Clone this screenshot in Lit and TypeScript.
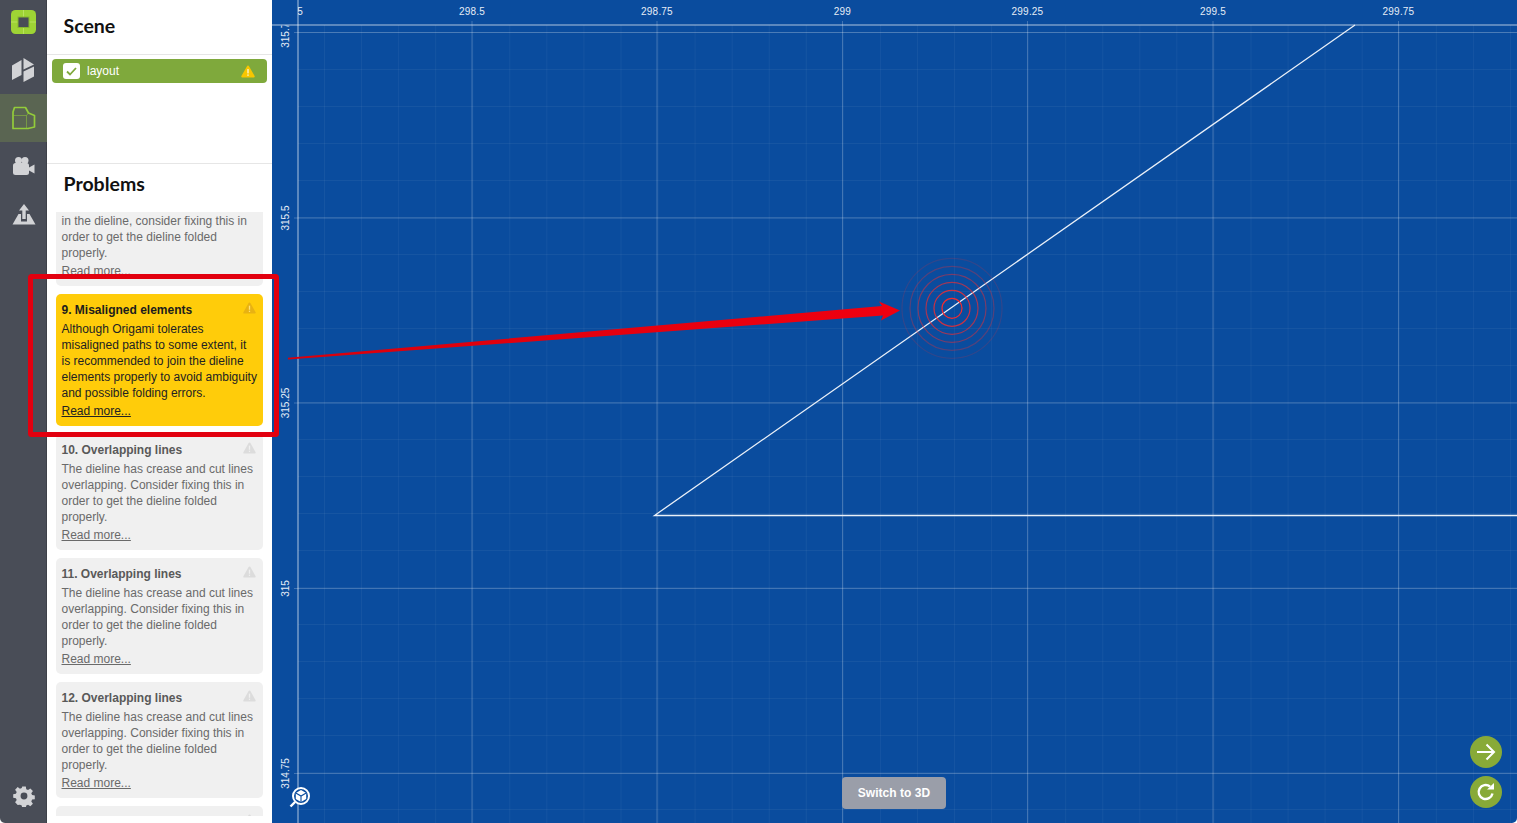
import { LitElement, html, css, svg } from "lit";
import { customElement } from "lit/decorators.js";

const warn = (cls: string) => html`<svg class=${cls} viewBox="0 0 14 13"><path d="M7 .5c.5 0 .8.3 1 .7l5.6 9.8c.4.7 0 1.5-.8 1.5H1.2c-.8 0-1.2-.8-.8-1.5L6 1.2C6.200.8 6.500.5 7 .5z" fill="currentColor"/><rect x="6.300" y="4" width="1.400" height="4.400" fill="var(--mark,#fff)"/><rect x="6.300" y="9.400" width="1.400" height="1.400" fill="var(--mark,#fff)"/></svg>`;

const overlap = "The dieline has crease and cut lines overlapping. Consider fixing this in order to get the dieline folded properly.";
const problems = [
  { t: "8. Open paths", b: "There are some open paths left\nin the dieline, consider fixing this in order to get the dieline folded properly.", hot: false },
  { t: "9. Misaligned elements", b: "Although Origami tolerates misaligned paths to some extent, it is recommended to join the dieline elements properly to avoid ambiguity and possible folding errors.", hot: true },
  { t: "10. Overlapping lines", b: overlap, hot: false },
  { t: "11. Overlapping lines", b: overlap, hot: false },
  { t: "12. Overlapping lines", b: overlap, hot: false },
  { t: "13. Overlapping lines", b: overlap, hot: false },
];

const xMajor = [
  { x: 287, l: "298.25" }, { x: 472, l: "298.5" }, { x: 657, l: "298.75" }, { x: 842.500, l: "299" },
  { x: 1027.500, l: "299.25" }, { x: 1213, l: "299.5" }, { x: 1398.500, l: "299.75" },
];
const yMajor = [
  { y: 32.500, l: "315.75" }, { y: 218, l: "315.5" }, { y: 403, l: "315.25" }, { y: 588.500, l: "315" }, { y: 773.500, l: "314.75" },
];
const W = 1517 - 272;
const range = (a: number, b: number, s: number) => { const o: number[] = []; for (let v = a; v <= b; v += s) o.push(v); return o; };

const grid = () => svg`
  <defs>
    <clipPath id="topclip"><rect x="26" y="0" width="${W}" height="25"/></clipPath>
    <clipPath id="leftclip"><rect x="0" y="25.500" width="26" height="798"/></clipPath>
  </defs>
  ${range(324.500, 1517, 37.060).map(x => svg`<line x1=${x - 272} x2=${x - 272} y1="25" y2="823" stroke="#fff" stroke-opacity=".05"/>`)}
  ${range(32.500, 823, 37).map(y => svg`<line x1="26" x2=${W} y1=${y} y2=${y} stroke="#fff" stroke-opacity=".05"/>`)}
  ${xMajor.slice(1).map(m => svg`<line x1=${m.x - 272} x2=${m.x - 272} y1="21" y2="823" stroke="#fff" stroke-opacity=".23"/>`)}
  ${yMajor.map(m => svg`<line x1="22" x2=${W} y1=${m.y} y2=${m.y} stroke="#fff" stroke-opacity=".23"/>`)}
  <line x1="0" x2=${W} y1="25" y2="25" stroke="#fff" stroke-opacity=".45" stroke-width="1.500"/>
  <line x1="26" x2="26" y1="0" y2="823" stroke="#fff" stroke-opacity=".45" stroke-width="1.500"/>
  <g clip-path="url(#topclip)">
    ${xMajor.map(m => svg`<text class="tick" x=${m.x - 272} y="15" text-anchor="middle">${m.l}</text>`)}
  </g>
  <g clip-path="url(#leftclip)">
    ${yMajor.map(m => svg`<text class="tick side-tick" transform="translate(17 ${m.y}) rotate(-90)" text-anchor="middle">${m.l}</text>`)}
  </g>
  <path d="M1083 25 L382.500 515.500 H${W}" fill="none" stroke="#eaf0f8" stroke-width="1.300"/>
  ${[[10, .95], [18, .8], [26, .62], [34, .45], [42, .3], [50, .16]].map(([r, o]) => svg`<circle cx="680" cy="308.300" r=${r} fill="none" stroke="#ff2a2a" stroke-opacity=${o} stroke-width="1.200"/>`)}
`;

@customElement("app-root")
export class AppRoot extends LitElement {
  static styles = css`
    :host { display: block; width: 100vw; height: 100vh; overflow: hidden; background: #fff; font-family: "Liberation Sans", Arial, sans-serif; }
    .app { position: relative; display: flex; height: 100%; }
    .rail { width: 47px; flex: none; background: #494d57; display: flex; flex-direction: column; border-bottom-left-radius: 5px; box-shadow: inset -1px 0 0 #3e4149; }
    .rail-item { height: 48px; display: flex; align-items: center; justify-content: center; flex: none; box-sizing: border-box; }
    .rail-item.logo { height: 46px; padding-bottom: 2px; }
    .rail-item.active { background: #5a6552; }
    .rail svg { display: block; }
    .rail-spacer { flex: 1; }
    .rail-item.gear { height: 53px; padding-bottom: 1px; }
    .side { width: 225px; flex: none; display: flex; flex-direction: column; background: #fff; }
    h2 { margin: 0; font-family: Lato, "Noto Sans", sans-serif; font-weight: 700; font-size: 19.500px; color: #111; padding-left: 16.500px; }
    .scene-head { height: 54px; line-height: 51px; border-bottom: 1px solid #e6e6e6; flex: none; box-sizing: content-box; }
    .scene-body { height: 109px; padding: 4px 5px 0 5px; box-sizing: border-box; border-bottom: 1px solid #e6e6e6; flex: none; }
    .layer { height: 24px; background: #7fa93c; border-radius: 4px; display: flex; align-items: center; padding: 0 12px 0 11px; color: #fff; font-size: 12px; gap: 7px; }
    .check { width: 17px; height: 16px; background: #fff; border-radius: 3px; display: flex; align-items: center; justify-content: center; flex: none; }
    .layer span { flex: 1; }
    .layer .w { width: 14px; height: 13px; color: #f7c600; --mark: #fff6cc; }
    .prob-head { height: 48px; line-height: 39px; flex: none; }
    .scroll { flex: 1; overflow: hidden; min-height: 0; margin: 0 9px 7px 9px; }
    .scroll-inner { margin-top: -42px; display: flex; flex-direction: column; gap: 8px; }
    .card { position: relative; background: #f0f0f0; border-radius: 5px; padding: 8px 5.500px 7px; color: #6a6a6a; font-size: 12px; line-height: 16px; flex: none; }
    .card .title { font-weight: 700; color: #595959; display: block; margin-bottom: 3px; }
    .card p { margin: 0 0 2px; white-space: pre-line; }
    .card a { color: inherit; text-decoration: underline; display: block; }
    .card .w { position: absolute; top: 8px; right: 7px; width: 13px; height: 12px; color: #dcdcdc; --mark: #f0f0f0; }
    .card.hot { background: #ffcc0a; color: #222; }
    .card.hot .title { color: #1c1c1c; }
    .card.hot .w { color: #e8b212; --mark: #ffe27a; }
    .canvas { position: relative; flex: 1; min-width: 0; background: #0a4c9e; overflow: hidden; border-bottom-right-radius: 5px; }
    .grid { position: absolute; inset: 0; width: 100%; height: 100%; display: block; }
    .tick { fill: #e6edf6; font-family: "Liberation Sans", Arial, sans-serif; font-size: 10px; letter-spacing: .2px; }
    .side-tick { letter-spacing: 0; }
    .switch { position: absolute; left: 570px; bottom: 14px; width: 104px; height: 32px; background: #9a9ea9; border: none; border-radius: 4px; color: #fff; font: 700 12px "Liberation Sans", Arial, sans-serif; letter-spacing: .05px; padding: 0; }
    .fab { position: absolute; left: 1198px; width: 32px; height: 32px; border-radius: 50%; background: #88aa38; display: flex; align-items: center; justify-content: center; }
    .fab.next { top: 736px; }
    .fab.reload { top: 776px; }
    .find { position: absolute; left: 17px; top: 786px; width: 22px; height: 22px; display: block; }
    .overlay { position: absolute; inset: 0; width: 100%; height: 100%; pointer-events: none; display: block; }
  `;

  render() {
    return html`<div class="app">
      <nav class="rail">
        <div class="rail-item logo">
          <svg width="25" height="24" viewBox="0 0 25 24">
            <rect width="25" height="24" rx="4.500" fill="#9ed435"/>
            <path d="M0 12h7M18 12h7M12.500 0v7M12.500 17v7" stroke="#b8e25e" stroke-width="1"/>
            <rect x="7" y="7" width="11" height="10.500" fill="#484c56" stroke="#86b82e" stroke-width="1"/>
          </svg>
        </div>
        <div class="rail-item">
          <svg width="23" height="24" viewBox="0 0 23 24">
            <path d="M0 7.500 9.500 2v15L0 22z" fill="#d2d3d6"/>
            <path d="M11.500 0 22 6.500 11.500 11.500zM11.500 13.500 22 8.500v10L11.500 24z" fill="#d2d3d6"/>
          </svg>
        </div>
        <div class="rail-item active">
          <svg width="24" height="24" viewBox="0 0 24 24" fill="none" stroke="#93cc3a">
            <path d="M2.500 1.500H13.500L16.500 7 22.500 9.500V21L16 22.500H1V6z" stroke-width="1.700" stroke-linejoin="round"/>
            <path d="M1.500 9.500H14.500V22M14.500 9.500 16.500 7" stroke-width="1" stroke-opacity=".5"/>
          </svg>
        </div>
        <div class="rail-item">
          <svg width="22" height="20" viewBox="0 0 22 20" fill="#d2d3d6">
            <circle cx="5.500" cy="4.500" r="3.500"/><circle cx="12" cy="4.500" r="3.500"/>
            <rect x="0" y="7" width="16" height="12" rx="2.500"/>
            <path d="M16 11.500 21.500 8.500v9L16 14.500z"/>
          </svg>
        </div>
        <div class="rail-item">
          <svg width="24" height="22" viewBox="0 0 24 22" fill="#d2d3d6">
            <path d="M6.500 11h11l6 10.500H.5z"/>
            <path d="M10 8v9.500h4V8" fill="#494d57" stroke="#494d57" stroke-width="2"/>
            <path d="M12 1 17 7.500h-3.300V16h-3.400V7.500H7z"/>
          </svg>
        </div>
        <div class="rail-spacer"></div>
        <div class="rail-item gear">
          <svg width="22" height="22" viewBox="0 0 22 22">
            <path fill="#d2d3d6" fill-rule="evenodd" d="M9 .5h4l.5 3 2 .9 2.500-1.800 2.900 2.900-1.800 2.500.9 2 3 .5v4l-3 .5-.9 2 1.800 2.500-2.900 2.900-2.500-1.800-2 .9-.5 3H9l-.5-3-2-.9L4 20.900 1.100 18l1.800-2.500-.9-2-3-.5V9l3-.5.9-2L1.100 4 4 1.100l2.500 1.800 2-.9zM11 7.200a3.800 3.800 0 1 0 0 7.600 3.800 3.800 0 0 0 0-7.600z" transform="translate(1.100 1.100) scale(.9)"/>
          </svg>
        </div>
      </nav>

      <aside class="side">
        <h2 class="scene-head">Scene</h2>
        <div class="scene-body">
          <div class="layer">
            <div class="check"><svg width="11" height="9" viewBox="0 0 11 9"><path d="M1 4.500 4 7.500 10 1" fill="none" stroke="#7fa93c" stroke-width="1.800"/></svg></div>
            <span>layout</span>
            ${warn("w")}
          </div>
        </div>
        <h2 class="prob-head">Problems</h2>
        <div class="scroll">
          <div class="scroll-inner">
            ${problems.map(p => html`<div class="card ${p.hot ? "hot" : ""}">
              <span class="title">${p.t}</span>
              ${warn("w")}
              <p>${p.b}</p>
              <a>Read more...</a>
            </div>`)}
          </div>
        </div>
      </aside>

      <main class="canvas">
        <svg class="grid" viewBox="0 0 ${W} 823" preserveAspectRatio="none">${grid()}</svg>
        <button class="switch">Switch to 3D</button>
        <div class="fab next">
          <svg width="20" height="18" viewBox="0 0 20 18" fill="none" stroke="#fff" stroke-width="2"><path d="M1 9h17M10.500 1.500 18 9l-7.500 7.500"/></svg>
        </div>
        <div class="fab reload">
          <svg width="20" height="20" viewBox="0 0 20 20" fill="none"><path d="M16.500 11.500a7 7 0 1 1-2.500-7" stroke="#fff" stroke-width="2.400"/><path d="M11 7.500h7V1z" fill="#fff"/></svg>
        </div>
        <svg class="find" viewBox="0 0 22 22">
          <circle cx="12" cy="10" r="8" fill="#0a4c9e" stroke="#fff" stroke-width="2"/>
          <path d="M6 16 1.500 20.500" stroke="#fff" stroke-width="2.400"/>
          <path d="M12 4 17.200 7v6L12 16 6.800 13V7z" fill="#fff"/>
          <path d="M6.800 7 12 10l5.200-3M12 10v6" fill="none" stroke="#0a4c9e" stroke-width="1.100"/>
        </svg>
      </main>

      <svg class="overlay" viewBox="0 0 1517 823">
        <defs><linearGradient id="arrowfill2" x1="0" x2="1"><stop offset="0" stop-color="#d8000c"/><stop offset="1" stop-color="#f00010"/></linearGradient></defs>
        <rect x="30.500" y="276.500" width="246" height="158" rx="1" fill="none" stroke="#e2000f" stroke-width="5"/>
        <path d="M288 357.800 882 306 879 301.500 900 310.500 881 320.500 883 315.500 288 359.400z" fill="url(#arrowfill2)"/>
      </svg>
    </div>`;
  }
}
